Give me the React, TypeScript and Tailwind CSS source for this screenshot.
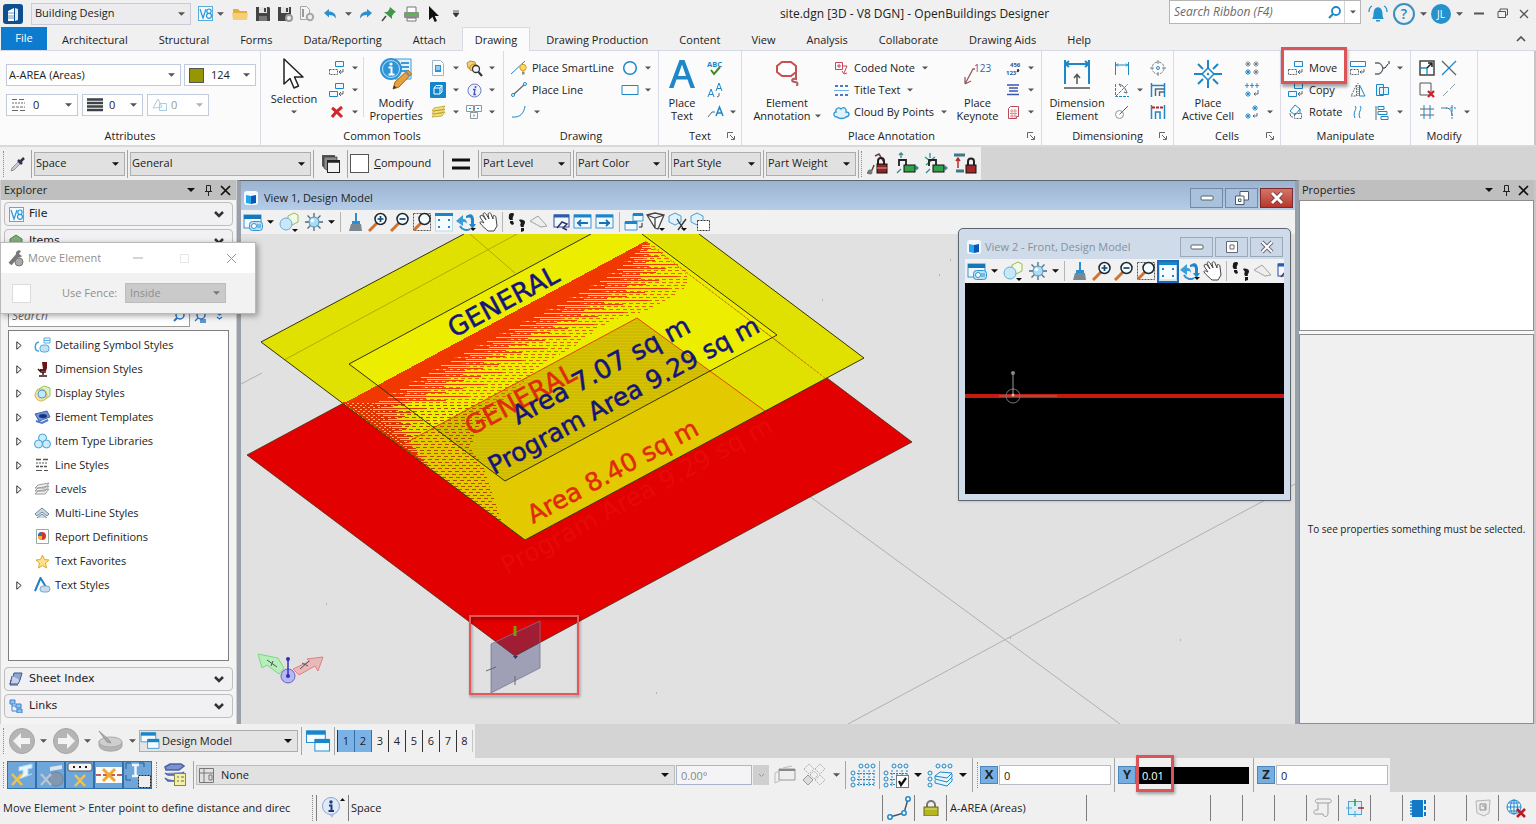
import React, { ReactNode } from "react";

/* ---------- helpers ---------- */

type Kids = { children?: ReactNode };

function S({ w = 16, h, v, children }: { w?: number; h?: number; v?: string } & Kids) {
  return (
    <svg width={w} height={h ?? w} viewBox={v ?? `0 0 ${w} ${h ?? w}`} fill="none" className="shrink-0" aria-hidden="true">
      {children}
    </svg>
  );
}

function Caret({ color = "#555", w = 7 }: { color?: string; w?: number }) {
  return (
    <svg width={w} height="4" viewBox="0 0 8 4" className="shrink-0" aria-hidden="true">
      <path d="M0 0h8L4 4z" fill={color} />
    </svg>
  );
}

function Btn({ label, className = "", children }: { label: string; className?: string } & Kids) {
  return (
    <button type="button" aria-label={label} className={`flex shrink-0 items-center justify-center ${className}`}>
      {children}
    </button>
  );
}

function CaretBtn({ label, color, w, className = "w-[18px]" }: { label: string; color?: string; w?: number; className?: string }) {
  return (
    <Btn label={label} className={`h-[22px] ${className}`}>
      <Caret color={color} w={w} />
    </Btn>
  );
}

function Sel({
  label, value, className = "", inner = "", icon, caret = "#555", cw = 7,
}: { label: string; value: string; className?: string; inner?: string; icon?: ReactNode; caret?: string; cw?: number }) {
  return (
    <div className={`relative flex shrink-0 items-center ${className}`}>
      {icon && <span className="flex shrink-0 items-center pl-1">{icon}</span>}
      <select aria-label={label} defaultValue={value} className={`h-full min-w-0 flex-1 appearance-none bg-transparent outline-none ${inner}`}>
        <option value={value}>{value}</option>
      </select>
      <span className="pointer-events-none absolute right-[5px] flex">
        <Caret color={caret} w={cw} />
      </span>
    </div>
  );
}

const Sep = ({ className = "h-[28px]" }: { className?: string }) => <div className={`w-px shrink-0 bg-[#a5a5a5] ${className}`} />;
const Grip = () => <div className="h-[26px] w-px shrink-0 border-l border-dotted border-[#8a8a8a]" />;

/* ---------- icons ---------- */

const B = "#1d87c8";
const G = "#5b6770";

const I = {
  app: (
    <S w={20}>
      <rect width="20" height="20" rx="3" fill="#0d4f8f" />
      <path d="M5 7l6-3v13H5z" fill="#fff" />
      <path d="M12 4l3 1v11l-3 1z" fill="#dcebf7" />
      <path d="M5 9h6M5 12h6M5 14h6" stroke="#6f9dc5" />
    </S>
  ),
  v8: (
    <S w={15}>
      <rect x=".5" y=".5" width="14" height="14" fill="#f4faff" stroke="#5aaade" />
      <path d="M2 3l3 9 3-9M11 3a2 2 0 0 1 0 4.300a2.400 2.400 0 0 1 0 5a2.400 2.400 0 0 1 0-5A2 2 0 0 1 11 3" stroke="#2b95d4" strokeWidth="1.200" />
    </S>
  ),
  folder: (
    <S w={16}>
      <path d="M1 3h5l2 2h7v9H1z" fill="#e3ac3c" />
      <path d="M0 7h16l-1 7H1z" fill="#f6cf74" />
    </S>
  ),
  save: (
    <S w={16}>
      <path d="M1 1h13l1 1v13H1z" fill="#444" />
      <path d="M4 1h8v6H4z" fill="#e4e4e4" />
      <path d="M9 2h2v4H9z" fill="#444" />
      <path d="M4 10h8v5H4z" fill="#777" />
    </S>
  ),
  saveGear: (
    <S w={16}>
      <path d="M1 1h13v14H1z" fill="#444" />
      <path d="M4 1h8v6H4z" fill="#e4e4e4" />
      <path d="M9 2h2v4H9z" fill="#444" />
      <circle cx="12" cy="12" r="3" stroke="#9a9a9a" strokeWidth="2" fill="#eee" />
    </S>
  ),
  docGear: (
    <S w={16}>
      <path d="M1.500.500h6l3 3v10h-9z" stroke="#a5a5a5" fill="#f3f3f3" />
      <path d="M4 3v8" stroke="#999" strokeWidth="2" />
      <circle cx="11" cy="11" r="3.200" stroke="#a8a8a8" strokeWidth="2" fill="#eee" />
    </S>
  ),
  undo: (
    <S w={14} h={12}>
      <path d="M1 5l5-4v2.500c4 0 7 2 7 7-1.500-2.500-3.500-3.500-7-3.500V9.500z" fill="#2b8fd0" />
    </S>
  ),
  redo: (
    <S w={14} h={12}>
      <path d="M13 5L8 1v2.500c-4 0-7 2-7 7C2.500 8 4.500 7 8 7v2.500z" fill="#2b8fd0" />
    </S>
  ),
  pinGreen: (
    <S w={16}>
      <path d="M9 1l6 5-2 1-2 3 0 3-8-7 3 0 2-2z" fill="#3e9a4a" />
      <path d="M5 10l-4 5" stroke="#444" strokeWidth="1.500" />
    </S>
  ),
  print: (
    <S w={17} h={16}>
      <path d="M4 1h9v6H4z" fill="#fff" stroke="#777" />
      <rect x="1" y="6" width="15" height="6" rx="1" fill="#8d8d8d" />
      <path d="M2 9h13" stroke="#58b94b" strokeWidth="2" />
      <path d="M4 12h9v3H4z" fill="#fff" stroke="#777" />
    </S>
  ),
  cursorBlack: (
    <S w={12} h={18}>
      <path d="M1 1v14l3.500-3 2.200 5 2.300-1-2.200-5H11z" fill="#111" />
    </S>
  ),
  cursorBig: (
    <S w={24} h={34}>
      <path d="M2 2v25l6-5.500 4 9.500 4.500-2-4-9H21z" fill="#fff" stroke="#222" strokeWidth="1.500" strokeLinejoin="round" />
    </S>
  ),
  move: (
    <S w={18} h={16}>
      <path d="M7.500 1.500h8v5h-8z" stroke={B} fill="#f1f8fd" />
      <path d="M1.500 9.500h8v5h-8z" stroke={G} strokeDasharray="2 1" />
      <path d="M15 9v3h-3M13 10l-2 2 2 2" stroke={G} />
    </S>
  ),
  copy: (
    <S w={18} h={16}>
      <path d="M7.500 1.500h8v5h-8zM1.500 9.500h8v5h-8z" stroke={B} fill="#f1f8fd" />
      <path d="M15 9v3h-3M13 10l-2 2 2 2" stroke={G} />
    </S>
  ),
  del: (
    <S w={14}>
      <path d="M2 3c3 2 7 6 10 9M12 2C8 5 5 8 2 12" stroke="#d0282b" strokeWidth="3" />
    </S>
  ),
  modProps: (
    <S w={34} h={34}>
      <path d="M16 2h16v20H16z" fill="#e4f2fb" stroke="#3a9bd8" />
      <path d="M22 6h8M22 10h8M22 14h8" stroke="#3a9bd8" strokeWidth="2" />
      <circle cx="12" cy="12" r="11" fill="#2c94d8" />
      <circle cx="12" cy="12" r="8.500" stroke="#bfe0f5" />
      <circle cx="12" cy="7" r="1.600" fill="#fff" />
      <path d="M9.500 10.500h3V17M9.500 17.500h6" stroke="#fff" strokeWidth="2" />
      <path d="M14 32l2-7L29 13l3.500 4L20 30z" fill="#e6a03c" stroke="#a66a1b" />
      <path d="M14 32l1-3.500 2.500 2z" fill="#333" />
      <path d="M27 15l3.500 4" stroke="#8b8b8b" strokeWidth="2" />
    </S>
  ),
  docBlue: (
    <S w={14} h={16}>
      <path d="M1.500.500h8l3 3v12h-11z" stroke="#9db7c9" fill="#fafdff" />
      <path d="M4 5h6v7H4z" fill="#2f93d6" />
      <path d="M5 7h4M5 9h4" stroke="#fff" />
    </S>
  ),
  cubeBlue: (
    <S w={16}>
      <rect width="16" height="16" rx="1" fill="#1285cc" />
      <path d="M4 6h6v6H4zM4 6l2-2.500h6L10 6M12 3.500V10l-2 2" stroke="#fff" />
    </S>
  ),
  yLayers: (
    <S w={15} h={14}>
      <path d="M1 12l2-3 11-2-3 4zM1 9l2-3 11-2-3 4zM1 6l2-3 11-2-3 4z" stroke="#b99f2a" strokeWidth=".8" fill="#f3e27c" />
    </S>
  ),
  search3: (
    <S w={17}>
      <path d="M1 3l3-2 5 1 1 4-4 3-4-1z" fill="#f6d27a" stroke="#c18e2a" />
      <path d="M4 6l3-2 4 1v4l-4 2-3-1z" fill="#f6d27a" stroke="#c18e2a" />
      <circle cx="10" cy="9" r="3.500" fill="#eef7ff" stroke="#333" strokeWidth="1.300" />
      <path d="M12.500 12l3.500 4" stroke="#333" strokeWidth="2" />
    </S>
  ),
  info: (
    <S w={15}>
      <circle cx="7.500" cy="7.500" r="6.500" fill="#eef1fd" stroke="#6b7cc8" />
      <circle cx="8.500" cy="4" r="1" fill="#3d55c0" />
      <path d="M6 6.500h2L7 11.500h2" stroke="#3d55c0" strokeWidth="1.300" />
    </S>
  ),
  keys: (
    <S w={16}>
      <path d="M.500 1.500h7v6h-7zM8.500 1.500h7v6h-7zM4.500 8.500h7v6h-7z" stroke="#8f979d" />
      <path d="M3 4.500h2M11 4.500h2M8 10.500v2" stroke={B} />
    </S>
  ),
  smartLine: (
    <S w={18}>
      <path d="M1 15L15 2" stroke={B} />
      <circle cx="13" cy="8.500" r="3.200" fill="#ffd965" stroke="#d89b1d" />
      <path d="M12 12.500h2.500v3H12z" fill="#8b8b8b" />
    </S>
  ),
  line: (
    <S w={18}>
      <path d="M3 14L15 3" stroke={G} strokeWidth="1.200" />
      <circle cx="3" cy="14" r="1.500" stroke={B} fill="#fff" />
      <circle cx="15" cy="3" r="1.500" stroke={B} fill="#fff" />
    </S>
  ),
  arc: (
    <S w={18}>
      <path d="M2 14c8 1 12-4 13-11" stroke={B} />
    </S>
  ),
  circle: (
    <S w={16}>
      <circle cx="8" cy="8" r="6.300" stroke={B} strokeWidth="1.500" />
    </S>
  ),
  rect: (
    <S w={18} h={12}>
      <path d="M1 1.500h16v9H1z" stroke={B} />
    </S>
  ),
  abc: (
    <S w={16}>
      <text x="0" y="6.500" fontSize="7.500" fontWeight="700" fill={B} fontFamily="Open Sans, sans-serif">ABC</text>
      <path d="M4 10l3 4 6-7" stroke="#3c8b24" strokeWidth="2" />
    </S>
  ),
  aa: (
    <S w={17}>
      <path d="M1 15l3-8 3 8M2 12.500h4M9 9l3-8 3 8M10 6.500h4" stroke={B} />
      <path d="M12 11v3l-2 1" stroke={G} />
    </S>
  ),
  noteA: (
    <S w={17}>
      <path d="M1 13l4-5h3" stroke={G} />
      <path d="M9 12l3.500-9L16 12M10 9h5" stroke={B} strokeWidth="1.500" />
    </S>
  ),
  bigA: (
    <S w={28} h={32}>
      <path d="M1 30L11.500 2h5L27 30h-4.500l-3-8.500h-11L5.500 30zM10 18h8L14 6.500z" fill={B} />
    </S>
  ),
  elemAnno: (
    <S w={28} h={28}>
      <path d="M9 2h9l5 4v6l-5 4H9l-5-4V6z" fill="#fff" stroke="#c8514f" strokeWidth="2" />
      <path d="M23 11v8c-5-1-5 3-1 3s2 3 2 4" stroke="#b45a58" strokeWidth="2" />
    </S>
  ),
  coded: (
    <S w={15}>
      <path d="M1.500 1.500h7v7h-7zM4 4h2v2H4z" stroke="#c4475a" />
      <path d="M8 5h5l-3 7M8 10l2 3 3-1" stroke="#c4475a" />
    </S>
  ),
  titleText: (
    <S w={15}>
      <path d="M1 3h3M6 3h3M11 3h3M1 12h3M6 12h3M11 12h3" stroke="#4b79c9" strokeWidth="2" />
      <path d="M0 7.500h15" stroke="#6fb0dc" />
    </S>
  ),
  cloud: (
    <S w={17} h={15}>
      <path d="M4 12c-4 0-4-5-1-5-1-4 3-5 5-3 3-3 6 0 5 3 4 0 4 4 0 5-2 2-7 2-9 0z" fill="#dff1fb" stroke="#3196d0" strokeWidth="1.300" />
    </S>
  ),
  keynote: (
    <S w={30} h={28}>
      <path d="M2 24L10 9h2M2 24v-7M2 24l6-3" stroke="#9a5b60" strokeWidth="1.300" />
      <text x="11" y="12" fontSize="10" fill="#3c63a8" fontFamily="Open Sans, sans-serif">123</text>
    </S>
  ),
  renum: (
    <S w={15}>
      <text x="4" y="6" fontSize="6" fontWeight="700" fill="#35539a" fontFamily="Open Sans, sans-serif">456</text>
      <text x="0" y="14" fontSize="6" fontWeight="700" fill="#35539a" fontFamily="Open Sans, sans-serif">123</text>
      <path d="M12 8l1 2-2 1z" fill="#333" stroke="#333" />
    </S>
  ),
  lines: (
    <S w={14}>
      <path d="M1 2h12M3 5h9M3 8h9M1 11.500h12" stroke="#3a56b0" strokeWidth="1.700" />
    </S>
  ),
  redDoc: (
    <S w={14} h={15}>
      <path d="M4.500 1.500h8v10h-2v2h-8v-10z" fill="#fff" stroke="#b94a56" />
      <path d="M4 6h7M4 8.500h7M4 11h7M6 4v9M9 4v9" stroke="#e08e95" />
    </S>
  ),
  dimBig: (
    <S w={28} h={32}>
      <path d="M2 2v24M26 2v24M2 6h24M6 3L2.500 6 6 9M22 3l3.500 3L22 9" stroke={B} strokeWidth="2" />
      <path d="M1 30h26M14 26V17M11 20l3-3.500 3 3.500" stroke="#555" strokeWidth="1.500" />
    </S>
  ),
  dim: (
    <S w={16}>
      <path d="M1.500 2v13M14.500 2v13M2 5h12M4 3.500L2.500 5 4 6.500M12 3.500L13.500 5 12 6.500" stroke={B} />
    </S>
  ),
  dimAngle: (
    <S w={16}>
      <path d="M1.500 2v12.500H15M2 14L14 2" stroke={B} strokeDasharray="3 1" />
      <path d="M5 2c4 1 7 5 8 9M5 2l2 3M13 11l-3-1" stroke={G} />
    </S>
  ),
  dimRad: (
    <S w={16}>
      <circle cx="5.500" cy="10.500" r="4" stroke="#8f979d" />
      <path d="M5.500 10.500L14 2" stroke={G} />
    </S>
  ),
  target: (
    <S w={16}>
      <circle cx="8" cy="8" r="6" stroke="#7b8790" strokeDasharray="3 1" />
      <circle cx="8" cy="8" r="1.500" stroke={B} />
      <path d="M8 0v4M8 12v4M0 8h4M12 8h4" stroke="#7b8790" />
    </S>
  ),
  dimStack: (
    <S w={16}>
      <path d="M1.500 1v14M14.500 1v14M2 3.500h12" stroke={B} strokeWidth="1.500" />
      <path d="M5.500 14V7H14M9.500 14v-4H14" stroke={G} strokeWidth="1.500" />
    </S>
  ),
  dimRed: (
    <S w={16}>
      <path d="M1.500 1v14M14.500 1v14M5.500 15V8H10v7" stroke={B} strokeWidth="1.500" />
      <path d="M2 3.500h12" stroke="#b3262b" strokeWidth="2" strokeDasharray="3 1" />
    </S>
  ),
  cellBig: (
    <S w={30}>
      <path d="M15 1v8M15 21v8M1 15h8M21 15h8M5 5l5 5M20 20l5 5M25 5l-5 5M10 20l-5 5" stroke={B} strokeWidth="2" />
      <path d="M15 9l6 6-6 6-6-6z" stroke={B} strokeWidth="1.500" />
      <circle cx="15" cy="15" r="1.200" fill={B} />
    </S>
  ),
  cells4: (
    <S w={16}>
      <path d="M4 1v6M1 4h6M12 1v6M9 4h6M12 9v6M9 12h6M2 2l4 4M6 2L2 6M10 2l4 4M14 2l-4 4M10 10l4 4M14 10l-4 4" stroke={G} strokeWidth=".7" />
      <path d="M4 9v6M1 12h6M2 10l4 4M6 10l-4 4" stroke={B} />
    </S>
  ),
  cells3: (
    <S w={16}>
      <path d="M3 1v5M1 3.500h4M8 1v5M6 3.500h4M13 1v5M11 3.500h4M4 9v6M1 12h6M2 10l4 4M6 10l-4 4" stroke={B} strokeWidth=".9" />
      <path d="M14 8v4h-4M11.500 10.500L10 12l1.500 1.500" stroke={G} />
    </S>
  ),
  cells2: (
    <S w={16}>
      <path d="M11 1v6M8 4h6M9 2l4 4M13 2L9 6M4 9v6M1 12h6M2 10l4 4M6 10l-4 4" stroke={B} strokeWidth=".9" />
      <path d="M13 9v3h-4M10.500 10.500L9 12l1.500 1.500" stroke={G} />
    </S>
  ),
  rotate: (
    <S w={17}>
      <path d="M7 1l5 4-5 6-5-4zM12 5v5" stroke={B} />
      <path d="M6.500 9.500h7v5h-7z" stroke={G} strokeDasharray="2 1" />
      <path d="M2 9c0 3 1 4 3 4" stroke={G} />
    </S>
  ),
  stretch: (
    <S w={16}>
      <path d="M.500 1.500h15v5H.500z" stroke={B} />
      <path d="M.500 9.500h8v5h-8z" stroke={G} strokeDasharray="2 1" />
      <path d="M14 9v3h-4M11.500 10.500L10 12l1.500 1.500" stroke={G} />
    </S>
  ),
  mirror: (
    <S w={16}>
      <path d="M9.500 3l5.500 11H9.500z" stroke={B} />
      <path d="M6.500 3L1 14h5.500z" stroke={G} strokeDasharray="2 1" />
      <path d="M8 1v14" stroke={G} strokeDasharray="1 1" />
    </S>
  ),
  wave: (
    <S w={14} h={16}>
      <path d="M4 2c3 3-3 6 0 12M9 2c3 3-3 6 0 12" stroke={B} />
    </S>
  ),
  trim: (
    <S w={17}>
      <path d="M1 3h4c5 3 5 8 0 11H1" stroke={G} strokeWidth="1.300" />
      <path d="M9 8h2l3-4M15 1v3" stroke="#222" />
    </S>
  ),
  union: (
    <S w={15}>
      <path d="M1.500 1.500h7v11h-7zM4.500 4.500h9v7h-9z" stroke={B} fill="#e8f4fb" />
      <path d="M8.500 4.500v7" stroke={B} />
    </S>
  ),
  align: (
    <S w={15}>
      <path d="M1 1v14" stroke={G} />
      <path d="M3 1.500h6v3H3zM3 6.500h9v3H3zM6 11.500h7v3H6z" stroke={B} />
    </S>
  ),
  scale: (
    <S w={16}>
      <path d="M1 1h14v14H1z" stroke="#444" strokeWidth="1.500" />
      <path d="M1 8h7v7" stroke={B} strokeWidth="1.300" />
      <path d="M8 8l5-5M9 3h4v4" stroke="#222" strokeWidth="1.500" />
    </S>
  ),
  boxDel: (
    <S w={16}>
      <path d="M1 1h11v12H1z" stroke="#555" />
      <path d="M9 9l6 6M15 9l-6 6" stroke="#cc2229" strokeWidth="2.300" />
    </S>
  ),
  hash: (
    <S w={16}>
      <path d="M5 1v14M11 1v14" stroke={B} />
      <path d="M1 5h14M1 11h14" stroke={G} />
    </S>
  ),
  cross: (
    <S w={16}>
      <path d="M1 1l14 14" stroke={G} strokeWidth="1.300" />
      <path d="M15 1L1 15" stroke={B} strokeWidth="1.300" />
    </S>
  ),
  slash: (
    <S w={14}>
      <path d="M1 13L6 8M8 6l5-5" stroke="#8aa0ae" />
    </S>
  ),
  fillet: (
    <S w={16}>
      <path d="M0 4h6" stroke={B} />
      <path d="M5 4c5 0 6 4 6 8" stroke={G} />
      <path d="M11 1v14M9 4h6" stroke={B} strokeDasharray="3 1" />
    </S>
  ),
  launcher: (
    <S w={8}>
      <path d="M.500 6V.500H6M3 3l4 4M7.500 4v3.500H4" stroke="#666" />
    </S>
  ),
  dropper: (
    <S w={16}>
      <path d="M1 15l1-3 6-6 2 2-6 6z" fill="#c9c9d6" stroke="#777" strokeWidth=".7" />
      <path d="M8 4l4 4M10 6l4-4" stroke="#2f3350" strokeWidth="2.500" />
    </S>
  ),
  stack: (
    <S w={20}>
      <path d="M1 1h13v4H5v10l-4-3z" fill="#555" />
      <path d="M3 3h13v4H7v10l-4-3z" fill="#8a8a8a" stroke="#333" strokeWidth=".7" />
      <rect x="6.500" y="6.500" width="12" height="12" fill="#f2f2f2" stroke="#222" />
      <path d="M6 7.500h13" stroke="#222" strokeWidth="2.500" />
    </S>
  ),
  equals: (
    <S w={18} h={14}>
      <path d="M0 3h18M0 11h18" stroke="#111" strokeWidth="3" />
    </S>
  ),
  lockRed: (
    <S w={24}>
      <path d="M9 4l4-2 5 8M1 21c5 0 6-5 7-8" stroke="#6f4040" strokeWidth="1.500" />
      <circle cx="4" cy="20" r="2.500" fill="#777" />
      <path d="M12 13V9a3 3 0 0 1 6 0v4" stroke="#222" strokeWidth="2" />
      <rect x="11" y="12" width="10" height="9" fill="#8f2326" stroke="#111" />
      <path d="M11 16h10" stroke="#e0a0a0" />
    </S>
  ),
  lockGreen: (
    <S w={24}>
      <path d="M6 1v5M4 3l2-2 2 2M2 21l4-4M20 16h3M21 14l2 2-2 2" stroke="#3b8a94" strokeWidth="1.300" />
      <path d="M4 14V8h7v5" stroke="#222" strokeWidth="1.800" />
      <rect x="9" y="13" width="11" height="7" fill="#33a04c" stroke="#111" />
    </S>
  ),
  lockGreen2: (
    <S w={24}>
      <path d="M6 1v5M1 5l5 4M11 5L6 9M2 21l4-4M20 16h3M21 14l2 2-2 2M2 13l7-6" stroke="#3b8a94" strokeWidth="1.300" />
      <path d="M5 14V8h7v5" stroke="#222" strokeWidth="1.800" />
      <rect x="9" y="13" width="11" height="7" fill="#33a04c" stroke="#111" />
    </S>
  ),
  lockT: (
    <S w={24}>
      <path d="M1 3h11M3 19h8" stroke="#3d7785" strokeWidth="3" />
      <path d="M5 16V7M3 9l2-3 2 3" stroke="#b52c2c" strokeWidth="1.500" />
      <path d="M15 13V9.500a3 3 0 0 1 6 0V13" stroke="#222" strokeWidth="2" />
      <rect x="13" y="13" width="10" height="8" fill="#a0282b" stroke="#111" />
    </S>
  ),
  viewCube: (
    <S w={14}>
      <rect width="14" height="14" rx="3" fill="#f4f8fc" />
      <path d="M2 4l5 1v8l-5-1z" fill="#23a7ec" />
      <path d="M7 5l5-1v8l-5 1z" fill="#0a55b8" />
    </S>
  ),
  viewAttr: (
    <S w={20}>
      <rect x="1" y="3" width="17" height="13" fill="#f2f9fe" stroke="#3295d3" />
      <path d="M1 5h17" stroke="#1777b8" strokeWidth="4" />
      <rect x="6.500" y="9.500" width="13" height="9" rx="3" fill="#b9e0f6" stroke="#3295d3" />
      <circle cx="11" cy="14" r="2.500" fill="#fff" stroke="#3295d3" />
      <path d="M15 12v4M17 12v4" stroke="#3295d3" />
    </S>
  ),
  dispStyle: (
    <S w={20}>
      <path d="M9 4l6-3 4 2v7l-6 3-4-3z" fill="#f2f9e9" stroke="#94bd55" />
      <circle cx="7" cy="12" r="6" fill="#c7e8f8" stroke="#63afd6" />
      <path d="M13 17h6l-3 3z" fill="#111" />
    </S>
  ),
  bright: (
    <S w={20}>
      <path d="M10 1v18M1 10h18M3.500 3.500l13 13M16.500 3.500l-13 13" stroke="#4b6a80" strokeWidth="1.300" />
      <circle cx="10" cy="10" r="5" fill="#a9dcf5" stroke="#4f94b8" />
      <circle cx="8.500" cy="8.500" r="1.800" fill="#fff" />
    </S>
  ),
  brush: (
    <S w={16} h={20}>
      <path d="M7 1h2v9H7z" fill="#2a8fd0" />
      <path d="M4 9h8v3H4z" fill="#2a8fd0" />
      <path d="M3 12h10l1 7H1z" fill="#7a8894" />
    </S>
  ),
  zoomIn: (
    <S w={20}>
      <path d="M9 11l-8 8" stroke="#d1722e" strokeWidth="3" />
      <circle cx="12.500" cy="7" r="5.500" fill="#f4fbff" stroke="#1c2630" strokeWidth="1.500" />
      <path d="M9.500 7h6M12.500 4v6" stroke="#12466e" strokeWidth="1.700" />
    </S>
  ),
  zoomOut: (
    <S w={20}>
      <path d="M9 11l-8 8" stroke="#d1722e" strokeWidth="3" />
      <circle cx="12.500" cy="7" r="5.500" fill="#f4fbff" stroke="#1c2630" strokeWidth="1.500" />
      <path d="M9.500 7h6" stroke="#12466e" strokeWidth="1.700" />
    </S>
  ),
  zoomWin: (
    <S w={20}>
      <rect x="1.500" y="1.500" width="17" height="17" stroke="#555" strokeDasharray="2 1" />
      <path d="M9 11l-7 7" stroke="#d1722e" strokeWidth="3" />
      <circle cx="12.500" cy="7" r="5.500" fill="#f4fbff" stroke="#1c2630" strokeWidth="1.500" />
    </S>
  ),
  fit: (
    <S w={20}>
      <rect x="1.500" y="2" width="17" height="17" fill="#f6fbff" stroke="#bcd9ec" />
      <path d="M1 2.500h18" stroke="#1a85cb" strokeWidth="3" />
      <path d="M4 7h2v2H4zM14 7h2v2h-2zM4 14h2v2H4zM14 14h2v2h-2z" fill="#2187c9" />
    </S>
  ),
  rotView: (
    <S w={20}>
      <path d="M0 9l7-6v4c3 0 4 2 4 5-1-2-2-2-4-2v4z" fill="#3a9fd8" />
      <path d="M10 4c5-3 7-2 8 3v5h2l-3.500 5L13 12h2V8c0-3-2-3-5-2z" fill="#2187c9" />
      <path d="M4 14c2 4 7 5 10 3" stroke="#2c92cf" strokeWidth="2" />
      <path d="M14 16h6l-3 3z" fill="#111" />
    </S>
  ),
  hand: (
    <S w={20}>
      <path d="M6 11L2 5c0-2 2-2 3-1l3 4-3-6c1-2 2-1 3 0l3 5-1-5c1-2 3-1 3 0l2 5 0-3c2-1 3 0 3 2l1 8-3 5-6 0C8 17 4 14 2 11c0-2 2-1 4 0z" fill="#fff" stroke="#444" />
    </S>
  ),
  walk: (
    <S w={20}>
      <path d="M2 3c0-2 4-3 5-1 0 2-2 3-1 6H3C1 6 2 5 2 3zM3 9h3l1 3-2 1-2-2zM12 8c2-1 6 0 6 2 0 3-2 3-1 5h-3c-1-2-1-3 0-4zM14 16h3v3l-3 1z" fill="#1a1a1a" />
    </S>
  ),
  fly: (
    <S w={20}>
      <path d="M1 9l8-5 9 10-6 1z" fill="#eee" stroke="#a2a2a2" />
      <path d="M1 9l11 6" stroke="#bbb" />
    </S>
  ),
  nav: (
    <S w={20}>
      <rect x="3" y="3" width="15" height="12" fill="#f2f9fe" stroke="#34479a" />
      <path d="M3 4h15" stroke="#2a5bb0" strokeWidth="3" />
      <path d="M6 16l5-6 5 2-4 4 4 2" stroke="#333a60" strokeWidth="1.500" />
    </S>
  ),
  prev: (
    <S w={20}>
      <rect x="1" y="3" width="17" height="13" fill="#f2f9fe" stroke="#3b98d4" />
      <path d="M1 4h17" stroke="#1a85cb" strokeWidth="3" />
      <path d="M4 11h11M8 8l-3 3 3 3" stroke="#1572b5" strokeWidth="1.800" />
    </S>
  ),
  next: (
    <S w={20}>
      <rect x="1" y="3" width="17" height="13" fill="#f2f9fe" stroke="#3b98d4" />
      <path d="M1 4h17" stroke="#1a85cb" strokeWidth="3" />
      <path d="M4 11h11M11 8l3 3-3 3" stroke="#1572b5" strokeWidth="1.800" />
    </S>
  ),
  copyView: (
    <S w={20}>
      <path d="M9 2h10v7H9zM1 10h12v8H1z" fill="#f2f9fe" stroke="#3b98d4" />
      <path d="M9 2.500h10M1 10.500h12" stroke="#1a85cb" strokeWidth="3" />
      <path d="M18 11v4h-3" stroke="#222" />
    </S>
  ),
  clip: (
    <S w={20}>
      <path d="M1 3l8-2 9 2-6 14-3-1zM1 3l8 3 9-3M9 6v10" stroke="#444" strokeWidth="1.300" fill="#fafafa" />
      <path d="M13 16h6l-3 3z" fill="#111" />
    </S>
  ),
  clipMask: (
    <S w={20}>
      <path d="M7 1l6 3v6l-6 3-6-3V4z" fill="#dff1fb" stroke="#4a9fd1" />
      <path d="M9 7l7 11M18 7l-8 11" stroke="#333" strokeWidth="1.300" />
      <path d="M13 16h6l-3 3z" fill="#111" />
    </S>
  ),
  section: (
    <S w={20}>
      <path d="M7 1l6 3v6l-6 3-6-3V4z" fill="#dff1fb" stroke="#4a9fd1" />
      <path d="M7.500 8.500h12v10h-12z" stroke="#333" strokeDasharray="2 1" fill="#fff" />
    </S>
  ),
};

/* ---------- title bar & tabs ---------- */

function TitleBar() {
  return (
    <header className="flex h-[27px] shrink-0 items-center bg-[#f0f0f0] pl-[3px]">
      {I.app}
      <Sel label="Workflow" value="Building Design" className="ml-2 h-[22px] w-[160px] border border-[#c9ccd6] bg-[#ececee]" inner="pl-[3px]" />
      <Btn label="Projects" className="ml-[6px] w-4">{I.v8}</Btn>
      <CaretBtn label="Projects options" className="w-[14px]" />
      <div className="ml-[2px] flex items-center">
        <Btn label="Open" className="w-[22px]">{I.folder}</Btn>
        <Btn label="Save" className="w-[23px]">{I.save}</Btn>
        <Btn label="Save settings" className="w-[22px]">{I.saveGear}</Btn>
        <Btn label="Compress" className="w-[22px]">{I.docGear}</Btn>
        <Btn label="Undo" className="w-[24px]">{I.undo}</Btn>
        <CaretBtn label="Undo list" className="w-[12px]" />
        <Btn label="Redo" className="w-[23px]">{I.redo}</Btn>
        <Btn label="Pin" className="w-[23px]">{I.pinGreen}</Btn>
        <Btn label="Print" className="w-[22px]">{I.print}</Btn>
        <Btn label="Element selection" className="w-[23px]">{I.cursorBlack}</Btn>
        <Btn label="Customize toolbar" className="w-[22px]">
          <S w={6} h={7}><path d="M0 1h6M0 3h6L3 7z" stroke="#333" fill="#333" strokeWidth=".8" /></S>
        </Btn>
      </div>
      <h1 className="min-w-0 flex-1 truncate pt-px pl-[193px] text-center text-[12px]">site.dgn [3D - V8 DGN] - OpenBuildings Designer</h1>
      <div className="flex h-[24px] w-[192px] shrink-0 items-center self-start border border-[#b5b5b5] bg-white">
        <input aria-label="Search Ribbon" placeholder="Search Ribbon (F4)" className="min-w-0 flex-1 bg-transparent pl-1 text-[12px] italic outline-none placeholder:text-[#6a6a6a]" />
        <Btn label="Search" className="w-[20px]">
          <S w={13}><circle cx="8" cy="5" r="4" stroke={B} strokeWidth="1.800" /><path d="M5 8l-4 4" stroke={B} strokeWidth="2.200" /></S>
        </Btn>
        <Btn label="Search options" className="h-full w-[16px] border-l border-[#d5d5d5]"><Caret w={6} /></Btn>
      </div>
      <Btn label="Notifications" className="ml-[7px] w-[20px]">
        <S w={20}>
          <path d="M4 15c2-2 1-5 2-8 1-5 7-5 8 0 1 3 0 6 2 8z" fill="#2492cc" />
          <path d="M8 16h4v1.500H8z" fill="#2492cc" />
          <path d="M4 2C2 3 1 6 1 8M16 2c2 1 3 4 3 6" stroke="#2492cc" strokeWidth="1.300" />
        </S>
      </Btn>
      <Btn label="Help" className="ml-1 w-[24px]">
        <span className="flex size-[22px] items-center justify-center rounded-full border-2 border-[#3b8fc0] text-[14px] leading-none font-semibold text-[#2a86bb]">?</span>
      </Btn>
      <CaretBtn label="Help options" className="w-[14px]" />
      <Btn label="Account" className="w-[22px]">
        <span className="flex size-5 items-center justify-center rounded-full bg-[#2492cc] text-[10px] leading-none text-white">JL</span>
      </Btn>
      <CaretBtn label="Account options" className="w-[14px]" />
      <Btn label="Minimize" className="w-[26px]"><S w={10} h={3}><path d="M0 1.500h10" stroke="#555" strokeWidth="2" /></S></Btn>
      <Btn label="Restore" className="w-[20px]"><S w={11}><path d="M1 3.500h7.500v6H1zM3 3V1h7.500v6H9" stroke="#555" /></S></Btn>
      <Btn label="Close" className="w-[24px]"><S w={10}><path d="M1 1l8 8M9 1L1 9" stroke="#555" strokeWidth="1.300" /></S></Btn>
    </header>
  );
}

const TABS = ["Architectural", "Structural", "Forms", "Data/Reporting", "Attach", "Drawing", "Drawing Production", "Content", "View", "Analysis", "Collaborate", "Drawing Aids", "Help"];

function Tabs() {
  return (
    <nav className="flex h-[24px] shrink-0 items-stretch gap-px border-b border-[#d6dae6] bg-[#f0f0f0] pl-px">
      <button type="button" className="-mr-px w-[46px] shrink-0 bg-[#0c7bd0] text-white">File</button>
      {TABS.map((t) => (
        <button
          key={t}
          type="button"
          className={t === "Drawing" ? "relative -mb-px shrink-0 border-x border-t border-[#d6dae6] bg-[#fbfbfc] px-3 pt-px" : "shrink-0 px-[15px] pt-[3px]"}
        >
          {t}
        </button>
      ))}
      <Btn label="Collapse ribbon" className="ml-auto w-[30px]">
        <S w={10} h={6}><path d="M1 5l4-4 4 4" stroke="#555" strokeWidth="1.700" /></S>
      </Btn>
    </nav>
  );
}

/* ---------- ribbon ---------- */

function Group({ title, className, launcher, children }: { title: string; className: string; launcher?: boolean } & Kids) {
  return (
    <section className={`relative flex shrink-0 flex-col border-r border-[#d8dbe4] ${className}`}>
      <div className="flex h-[75px] pt-[6px]">{children}</div>
      <div className="relative flex flex-1 items-center justify-center pt-px">
        {title}
        {launcher && <span className="absolute right-[6px]"><Btn label={`${title} settings`}>{I.launcher}</Btn></span>}
      </div>
    </section>
  );
}

function Big({ icon, lines, className, caret }: { icon: ReactNode; lines: string[]; className: string; caret?: boolean }) {
  return (
    <button type="button" className={`flex shrink-0 flex-col items-center justify-between leading-[13px] ${lines.length > 1 ? "h-[65px]" : "h-[61px]"} ${className}`}>
      <span className="flex h-[34px] items-center">{icon}</span>
      <span className="flex flex-col items-center">
        {lines.map((l, i) => (
          <span key={l} className="flex items-center gap-1 whitespace-nowrap">
            {l}
            {caret && lines.length > 1 && i === lines.length - 1 && <Caret w={6} />}
          </span>
        ))}
        {lines.length === 1 && <span className="flex h-[13px] items-center"><Caret w={6} /></span>}
      </span>
    </button>
  );
}

function Col({ items, className = "", carets = [] }: { items: [string, ReactNode][]; className?: string; carets?: number[] }) {
  return (
    <div className={`flex shrink-0 flex-col ${className}`}>
      {items.map(([n, ic], i) => (
        <div key={n} className="flex h-[22px] items-center">
          <Btn label={n} className="h-[22px] w-[20px]">{ic}</Btn>
          {carets.includes(i) && <CaretBtn label={`${n} options`} w={6} className="w-4" />}
        </div>
      ))}
    </div>
  );
}

function TextTool({ icon, text, caret }: { icon: ReactNode; text: string; caret?: boolean }) {
  return (
    <div className="flex h-[22px] items-center">
      <button type="button" className="flex items-center gap-1 whitespace-nowrap">
        <span className="flex w-[18px] justify-center">{icon}</span>
        {text}
      </button>
      {caret && <CaretBtn label={`${text} options`} w={6} className="w-[20px]" />}
    </div>
  );
}

function Ribbon() {
  return (
    <div className="relative flex h-[94px] shrink-0 border-r-2 border-[#c6c6c6] bg-[#fbfbfc]">
      <Group title="Attributes" className="w-[261px]">
        <div className="flex flex-col gap-2 pt-[7px] pl-[6px]">
          <div className="flex gap-[3px]">
            <Sel label="Active level" value="A-AREA (Areas)" className="h-[22px] w-[175px] border border-[#c3cadb] bg-white" inner="pl-[2px]" />
            <Sel label="Active color" value="124" className="h-[22px] w-[72px] border border-[#c3cadb] bg-white" inner="pl-[7px]"
              icon={<span className="size-[15px] border border-[#555] bg-[#969600]" />} />
          </div>
          <div className="flex gap-1">
            <Sel label="Line style" value="0" className="h-[22px] w-[72px] border border-[#c3cadb] bg-white" inner="pl-[7px]"
              icon={<S w={15} h={14}><path d="M1 1.500h12" stroke="#666" strokeDasharray="5 2" /><path d="M1 5h13" stroke="#666" strokeDasharray="2 1" /><path d="M1 9h13" stroke="#666" strokeDasharray="3 1" /><path d="M1 12.500h13" stroke="#666" strokeDasharray="6 2" /></S>} />
            <Sel label="Line weight" value="0" className="h-[22px] w-[61px] border border-[#c3cadb] bg-white" inner="pl-[6px]"
              icon={<S w={16} h={14}><path d="M0 1.500h16M0 5h16M0 8.500h16M0 12h16" stroke="#3b4248" strokeWidth="2.300" /></S>} />
            <Sel label="Transparency" value="0" caret="#b0b0b0" className="h-[22px] w-[62px] border border-[#c3cadb] bg-white text-[#9a9a9a]" inner="pl-[3px]"
              icon={<S w={16} h={14}><path d="M1 10l5-9 4 8zM7.500 5.500h7v7h-7z" stroke="#a5cfe6" /></S>} />
          </div>
        </div>
      </Group>

      <Group title="Common Tools" className="w-[243px]">
        <Big icon={I.cursorBig} lines={["Selection"]} className="w-[66px]" />
        <Col items={[["Move element", I.move], ["Copy element", I.copy], ["Delete", I.del]]} carets={[0, 1, 2]} />
        <div className="h-[60px] w-px bg-[#d8dbe4]" />
        <Big icon={I.modProps} lines={["Modify", "Properties"]} className="w-[64px]" />
        <Col items={[["Models", I.docBlue], ["References", I.cubeBlue], ["Level display", I.yLayers]]} carets={[0, 1, 2]} />
        <Col items={[["Explorer search", I.search3], ["Element info", I.info], ["Key-in", I.keys]]} carets={[0, 1, 2]} />
      </Group>

      <Group title="Drawing" className="w-[155px]">
        <div className="flex w-[116px] flex-col pl-[6px]">
          <TextTool icon={I.smartLine} text="Place SmartLine" />
          <TextTool icon={I.line} text="Place Line" />
          <div className="flex h-[22px] items-center">
            <Btn label="Place arc" className="w-[18px]">{I.arc}</Btn>
            <CaretBtn label="Arc options" w={6} />
          </div>
        </div>
        <Col items={[["Place circle", I.circle], ["Place block", I.rect]]} carets={[0, 1]} />
      </Group>

      <Group title="Text" className="w-[83px]" launcher>
        <Big icon={I.bigA} lines={["Place", "Text"]} className="w-[46px]" />
        <Col items={[["Spell checker", I.abc], ["Change text", I.aa], ["Place note", I.noteA]]} carets={[2]} />
      </Group>

      <Group title="Place Annotation" className="w-[300px]" launcher>
        <Big icon={I.elemAnno} lines={["Element", "Annotation"]} className="w-[90px]" caret />
        <div className="flex w-[120px] flex-col">
          <TextTool icon={I.coded} text="Coded Note" caret />
          <TextTool icon={I.titleText} text="Title Text" caret />
          <TextTool icon={I.cloud} text="Cloud By Points" caret />
        </div>
        <Big icon={I.keynote} lines={["Place", "Keynote"]} className="w-[51px]" />
        <Col items={[["Renumber", I.renum], ["Legend", I.lines], ["Schedule", I.redDoc]]} carets={[0, 1, 2]} />
      </Group>

      <Group title="Dimensioning" className="w-[132px]" launcher>
        <Big icon={I.dimBig} lines={["Dimension", "Element"]} className="w-[70px]" />
        <Col className="w-9" items={[["Linear dimension", I.dim], ["Angle dimension", I.dimAngle], ["Radial dimension", I.dimRad]]} carets={[1]} />
        <Col items={[["Center mark", I.target], ["Stacked dimension", I.dimStack], ["Change dimension", I.dimRed]]} />
      </Group>

      <Group title="Cells" className="w-[107px]" launcher>
        <Big icon={I.cellBig} lines={["Place", "Active Cell"]} className="w-[68px]" />
        <Col items={[["Cell matrix", I.cells4], ["Replace cell", I.cells3], ["Identify cell", I.cells2]]} carets={[2]} />
      </Group>

      <Group title="Manipulate" className="w-[130px]">
        <div className="flex w-[67px] flex-col pl-[6px]">
          <TextTool icon={I.move} text="Move" />
          <TextTool icon={I.copy} text="Copy" />
          <TextTool icon={I.rotate} text="Rotate" />
        </div>
        <Col items={[["Stretch", I.stretch], ["Mirror", I.mirror], ["Move parallel", I.wave]]} className="mr-1" />
        <Col items={[["Trim", I.trim], ["Union", I.union], ["Align", I.align]]} carets={[0, 2]} />
        <div className="absolute top-[-4px] left-0 h-[37px] w-[66px] border-[3px] border-[#dc5358] shadow-[1px_3px_3px_rgba(0,0,0,.35)]" />
      </Group>

      <Group title="Modify" className="w-[67px]">
        <Col className="ml-[6px]" items={[["Scale", I.scale], ["Delete vertex", I.boxDel], ["Break", I.hash]]} />
        <Col className="ml-[2px]" items={[["Intersect", I.cross], ["Partial delete", I.slash], ["Fillet", I.fillet]]} carets={[2]} />
      </Group>
    </div>
  );
}

/* ---------- part toolbar ---------- */

const graySel = "h-[24px] border border-[#adadad] bg-[#e1e1e1]";

function PartBar() {
  return (
    <div className="flex h-[35px] shrink-0 border-t-2 border-[#d9d9d9] bg-[#d4d4d4]">
      <div className="flex items-center gap-[2px] bg-[#f0f0f0] pr-[3px] pl-[3px]">
        <Grip />
        <Btn label="Match" className="w-[23px]">{I.dropper}</Btn>
        <Sep />
        <Sel label="Category" value="Space" caret="#111" className={`${graySel} w-[91px]`} inner="pl-px" />
        <Sep />
        <Sel label="Part" value="General" caret="#111" className={`${graySel} w-[181px]`} inner="pl-px" />
        <Sep />
        <Btn label="Layers" className="w-[29px]">{I.stack}</Btn>
        <Sep />
        <label className="flex w-[91px] items-center gap-[5px]">
          <input type="checkbox" className="size-[19px] appearance-none border border-[#555] bg-white" />
          <span><u>C</u>ompound</span>
        </label>
        <Sep />
        <Btn label="Equals" className="w-[30px]">{I.equals}</Btn>
        {["Part Level", "Part Color", "Part Style", "Part Weight"].map((p) => (
          <React.Fragment key={p}>
            <Sep />
            <Sel label={p} value={p} caret="#111" className={`${graySel} w-[90px]`} inner="pl-px" />
          </React.Fragment>
        ))}
        <Sep />
        <Grip />
        <Btn label="Lock A" className="w-[27px]">{I.lockRed}</Btn>
        <Btn label="Lock B" className="w-[27px]">{I.lockGreen}</Btn>
        <Btn label="Lock C" className="w-[27px]">{I.lockGreen2}</Btn>
        <Btn label="Lock D" className="w-[27px]">{I.lockT}</Btn>
      </div>
    </div>
  );
}

/* ---------- explorer ---------- */

function PanelHead({ title }: { title: string }) {
  return (
    <div className="flex h-[20px] shrink-0 items-center bg-[#bfbfbf] pr-[2px] pl-[3px]">
      <h2 className="flex-1">{title}</h2>
      <Btn label="Panel menu" className="w-[18px]"><Caret color="#111" w={8} /></Btn>
      <Btn label="Pin panel" className="w-[16px]"><S w={7} h={11}><path d="M1.500.500h4v6h-4zM0 6.500h7M3.500 7v4" stroke="#222" /></S></Btn>
      <Btn label="Close panel" className="w-[18px]"><S w={11}><path d="M1 1l9 9M10 1L1 10" stroke="#111" strokeWidth="1.700" /></S></Btn>
    </div>
  );
}

function Accordion({ title, icon }: { title: string; icon: ReactNode }) {
  return (
    <button type="button" className="mx-[3px] flex h-[24px] shrink-0 items-center gap-[5px] rounded-[4px] border border-[#bdbdc2] bg-[#f1f1f3] pr-[8px] pl-[3px] font-['DejaVu_Sans']">
      <span className="flex w-[16px] justify-center">{icon}</span>
      <span className="flex-1 text-left">{title}</span>
      <S w={10} h={7}><path d="M1 1l4 4 4-4" stroke="#333" strokeWidth="2.500" /></S>
    </button>
  );
}

const tIcon = {
  detail: <S w={17}><path d="M10 1h6v5h-6zM10 3.500h6" stroke="#5aa9dc" /><rect x="6" y="8" width="9" height="7" rx="3" fill="#bfe2f6" stroke="#5aa9dc" /><path d="M5 5c-5 1-5 9 0 9" stroke="#4a9fd1" strokeWidth="1.500" /></S>,
  dimen: <S w={16}><path d="M8 1h5v6l-1 3H6V8h3z" fill="#6b1418" /><path d="M4 8l3 3h5M9 11v3M5 15h8" stroke="#3b1012" strokeWidth="1.500" /></S>,
  display: <S w={17}><path d="M3 5l7-4 6 2v8l-6 4-7-2z" fill="#dff0c2" stroke="#9ec25b" /><circle cx="7" cy="10" r="6" fill="#f2dfa2" stroke="#d9b65c" /><circle cx="8" cy="9" r="4" fill="#c7e8f8" stroke="#4a9fd1" /></S>,
  elem: <S w={17}><path d="M1 5l12-3 3 6-11 4z" fill="#6f93d8" stroke="#3d63b3" /><ellipse cx="9" cy="7" rx="4" ry="2" fill="#1c3478" /><path d="M2 12l6 2 6-3" stroke="#5079c8" strokeWidth="2" /></S>,
  item: <S w={17}><circle cx="8.500" cy="5" r="4" fill="#ccecfa" stroke="#3fa0d6" /><circle cx="4.500" cy="11" r="4" fill="#ccecfa" stroke="#3fa0d6" /><circle cx="12.500" cy="11" r="4" fill="#ccecfa" stroke="#3fa0d6" /></S>,
  line: <S w={14}><path d="M1 1.500h12" stroke="#555" strokeWidth="1.500" strokeDasharray="5 2" /><path d="M1 5h12" stroke="#555" strokeDasharray="2 1" /><path d="M1 8.500h12" stroke="#555" strokeWidth="1.500" strokeDasharray="3 1" /><path d="M1 12.500h12" stroke="#555" strokeDasharray="6 2" /></S>,
  levels: <S w={16} h={15}><path d="M1 12l3-3 11-2-4 5zM1 9l3-3 11-2-4 5zM1 6l3-3 11-2-4 5z" stroke="#9b9b9b" fill="#f1f1f1" /></S>,
  multi: <S w={16}><path d="M1 9l7-6 7 6-2 2-5-4-5 4zM3 13l5-4 5 4" stroke="#6c8797" fill="#c9dae4" /></S>,
  report: <S w={15} h={16}><path d="M1.500.500h12v14h-12z" stroke="#9aa" fill="#fff" /><circle cx="7" cy="7" r="4" fill="#d8342a" /><path d="M7 7v4a4 4 0 0 1-4-4z" fill="#f0b429" /><path d="M7 3a4 4 0 0 0-4 4h4z" fill="#2f6fc4" /></S>,
  star: <S w={15}><path d="M7.500 1l2 4.500 4.500.500-3.500 3 1 5-4-2.500-4 2.500 1-5L1 6l4.500-.500z" fill="#fbe28a" stroke="#e0a92e" /></S>,
  text: <S w={17}><path d="M1 14L6.500 1 12 10" stroke="#1d7fc4" strokeWidth="2" /><rect x="6" y="9" width="10" height="6" rx="3" fill="#c4dcee" stroke="#7ba7c9" /></S>,
};

const TREE: [string, ReactNode, boolean][] = [
  ["Detailing Symbol Styles", tIcon.detail, true],
  ["Dimension Styles", tIcon.dimen, true],
  ["Display Styles", tIcon.display, true],
  ["Element Templates", tIcon.elem, true],
  ["Item Type Libraries", tIcon.item, true],
  ["Line Styles", tIcon.line, true],
  ["Levels", tIcon.levels, true],
  ["Multi-Line Styles", tIcon.multi, false],
  ["Report Definitions", tIcon.report, false],
  ["Text Favorites", tIcon.star, false],
  ["Text Styles", tIcon.text, true],
];

function Explorer() {
  return (
    <aside className="flex w-[237px] shrink-0 flex-col border-x border-[#d0d0d0] bg-[#f4f4f4]">
      <PanelHead title="Explorer" />
      <div className="flex min-h-0 flex-1 flex-col pt-[2px] pb-[6px]">
        <Accordion title="File" icon={I.v8} />
        <div className="h-[3px]" />
        <Accordion title="Items" icon={<S w={14}><path d="M7 1l6 4v7l-6 2-6-2V5z" fill="#7fae74" stroke="#55804c" /></S>} />
        <div className="mt-[52px] mr-[5px] ml-[7px] flex h-[22px] shrink-0 items-center">
          <div className="flex h-full w-[182px] items-center border border-[#999] bg-white">
            <input aria-label="Search explorer" placeholder="Search" className="min-w-0 flex-1 bg-transparent pl-[3px] text-[12px] italic outline-none placeholder:text-[#6a6a6a]" />
            <Btn label="Search" className="w-5"><S w={12}><circle cx="7" cy="5" r="4" stroke="#2a76c8" strokeWidth="1.500" /><path d="M4 8l-3 3" stroke="#2a76c8" strokeWidth="2" /></S></Btn>
          </div>
          <Btn label="Search options" className="w-[20px]"><S w={13}><circle cx="7" cy="5" r="4" stroke="#2a76c8" strokeWidth="1.500" /><path d="M4 8l-3 3M6 10h6M6 12h6" stroke="#2a76c8" strokeWidth="1.300" /></S></Btn>
          <Btn label="More" className="w-[18px]"><S w={7} h={9}><path d="M1 1l2.500 2L6 1M1 5l2.500 2L6 5" stroke="#2a76c8" strokeWidth="1.300" /></S></Btn>
        </div>
        <ul className="mx-[7px] mt-[3px] min-h-0 flex-1 overflow-hidden border border-[#7d7d82] bg-white pt-[2px]">
          {TREE.map(([n, ic, open]) => (
            <li key={n} className="flex h-[24px] items-center">
              <span className="flex w-[20px] justify-center">
                {open && <S w={6} h={9}><path d="M.800.800v7.400L5.200 4.500z" stroke="#333" /></S>}
              </span>
              <span className="flex w-[26px] justify-center">{ic}</span>
              <span>{n}</span>
            </li>
          ))}
        </ul>
        <div className="h-[6px]" />
        <Accordion title="Sheet Index" icon={<S w={14}><path d="M5 1h8l-2 7H3z" fill="#8ea5d6" stroke="#3f5687" /><path d="M3 4L1 12h8l2-4M2 8l-1 5h8" stroke="#3f5687" fill="#c7d2ea" /></S>} />
        <div className="h-[3px]" />
        <Accordion title="Links" icon={<S w={14}><path d="M1 1h5v4H1zM7 5h5v4H7zM8 10h5v4H8z" fill="#8dc3f0" stroke="#3a83cf" /><path d="M3 5v7h5M3 7h4" stroke="#3a83cf" /></S>} />
      </div>
    </aside>
  );
}

function MoveDialog() {
  return (
    <div role="dialog" aria-label="Move Element" className="absolute top-[62px] left-0 z-10 w-[256px] border border-[#b9b9b9] bg-[#f2f2f2] text-[#8f8f8f] shadow-[2px_2px_6px_rgba(0,0,0,.35)]">
      <div className="flex h-[30px] items-center bg-white pl-[6px]">
        <S w={17} h={18}><path d="M3 15l8-9" stroke="#777" strokeWidth="4" /><path d="M9 6c-1-4 3-6 5-4l-2 3 3 2c-1 2-4 2-6-1z" fill="#777" /><circle cx="12" cy="13" r="4" fill="#aaa" stroke="#777" /></S>
        <span className="ml-1 w-[98px]">Move Element</span>
        <Btn label="Minimize dialog" className="w-[23px]"><S w={10} h={2}><path d="M0 1h10" stroke="#aaa" /></S></Btn>
        <Btn label="Maximize dialog" className="ml-[24px] w-[22px]"><S w={9}><path d="M.500.500h8v8h-8z" stroke="#e6e6e6" /></S></Btn>
        <Btn label="Close dialog" className="ml-[24px] w-[24px]"><S w={11}><path d="M1 1l9 9M10 1L1 10" stroke="#999" /></S></Btn>
      </div>
      <div className="flex h-[40px] items-center pl-[11px]">
        <input id="fence" type="checkbox" className="size-[19px] appearance-none border border-[#dcdcdc] bg-white" />
        <label htmlFor="fence" className="ml-[31px] w-[63px]">Use Fence:</label>
        <Sel label="Fence mode" value="Inside" caret="#777" className="h-[20px] w-[101px] border border-[#bdbdbd] bg-[#cacaca]" inner="pl-1" />
      </div>
    </div>
  );
}

/* ---------- views ---------- */

function ViewTools({ fitActive, full }: { fitActive?: boolean; full?: boolean }) {
  const b = "h-[22px] w-[22px]";
  const line = "h-[20px] w-px shrink-0 bg-[#b5b5b5]";
  return (
    <div className="flex h-[24px] shrink-0 items-center overflow-hidden bg-[#f1f1f1] pl-px">
      <Btn label="View attributes" className={b}>{I.viewAttr}</Btn>
      <CaretBtn label="View attributes options" color="#111" className="w-[13px]" />
      <Btn label="Display style" className="h-[22px] w-[24px]">{I.dispStyle}</Btn>
      <Btn label="Brightness" className="h-[22px] w-[25px]">{I.bright}</Btn>
      <CaretBtn label="Brightness options" color="#111" className="w-[10px]" />
      <div className={`mx-1 ${line}`} />
      <Btn label="Update view" className={b}>{I.brush}</Btn>
      <Btn label="Zoom in" className={b}>{I.zoomIn}</Btn>
      <Btn label="Zoom out" className={b}>{I.zoomOut}</Btn>
      <Btn label="Window area" className={b}>{I.zoomWin}</Btn>
      <Btn label="Fit view" className={fitActive ? "h-[23px] w-[22px] border-2 border-[#1d6bb8]" : b}>{I.fit}</Btn>
      <Btn label="Rotate view" className={b}>{I.rotView}</Btn>
      <Btn label="Pan view" className={b}>{I.hand}</Btn>
      <div className={`mx-[3px] ${line}`} />
      <Btn label="Walk" className={b}>{I.walk}</Btn>
      <Btn label="Fly" className={b}>{I.fly}</Btn>
      <Btn label="Navigate view" className={b}>{I.nav}</Btn>
      {full && (
        <>
          <Btn label="View previous" className={b}>{I.prev}</Btn>
          <Btn label="View next" className={b}>{I.next}</Btn>
          <div className={`mx-[3px] ${line}`} />
          <Btn label="Copy view" className={b}>{I.copyView}</Btn>
          <Btn label="Clip volume" className={b}>{I.clip}</Btn>
          <Btn label="Clip mask" className={b}>{I.clipMask}</Btn>
          <Btn label="Section" className={b}>{I.section}</Btn>
        </>
      )}
    </div>
  );
}

const lerp = (t: number[][], y: number) => {
  for (let i = 1; i < t.length; i++) {
    if (y <= t[i][0]) {
      const [a, b] = [t[i - 1], t[i]];
      return b[1] === a[1] ? a[1] : a[1] + ((y - a[0]) / (b[0] - a[0])) * (b[1] - a[1]);
    }
  }
  return t[t.length - 1][1];
};
const SOLID = [[242, 650], [263, 674], [270, 680], [285, 672], [297, 654], [313, 622], [330, 578], [345, 550], [365, 512], [380, 490], [397, 466], [413, 448], [430, 432], [447, 424], [463, 428], [480, 442], [524, 480]];
const DASH = [[242, 650], [270, 686], [285, 688], [297, 670], [310, 648], [320, 610], [345, 576], [365, 540], [380, 525], [397, 508], [413, 492], [430, 478], [447, 470], [463, 482], [480, 488], [497, 494], [524, 502]];
const REACH = [1, 0.3, 0.65, 0.45, 0.85, 0.28, 0.55, 0.38, 0.75, 0.25, 0.6, 0.42];

function Stipple() {
  const out: ReactNode[] = [];
  for (let y = 242; y < 524; y++) {
    const xl = Math.round(y < 402 ? 645 - (y - 241) * 1.861 : 343 + (y - 402) * 1.32);
    const dark = y > 402;
    const xs = Math.round(xl + Math.max(0, lerp(SOLID, y) - xl) * REACH[y % 12] * (dark ? 0.7 : 1));
    if (xs > xl + 1) out.push(<path key={`s${y}`} d={`M${xl} ${y + 0.5}H${xs}`} stroke={dark ? "#dc3600" : "#f03800"} strokeDasharray={dark && y % 2 ? "3 2" : undefined} />);
    if (y % 3 === 0) {
      const xd = lerp(DASH, y);
      if (xd > xs) out.push(<path key={`d${y}`} d={`M${xs} ${y + 0.5}H${xd}`} stroke={dark ? "#b84a00" : "#e26800"} strokeDasharray="4 3" />);
    }
  }
  return <g shapeRendering="crispEdges">{out}</g>;
}

function MainCanvas() {
  const rows: number[] = [];
  for (let y = 320; y < 482; y += 3) rows.push(y);
  return (
    <svg className="block min-h-0 w-full flex-1 bg-[#e1e1e1]" viewBox="241 234 1054 490" preserveAspectRatio="xMinYMin slice" role="img" aria-label="3D design model">
      <defs>
        <clipPath id="upper"><path d="M261 342L525 540L864 358L699 234L464 234z" /></clipPath>
        <clipPath id="inner"><path d="M349 364L505 481L777 335L645 234L591 234z" /></clipPath>
        <filter id="sh"><feDropShadow dx="1" dy="2" stdDeviation="1.500" floodOpacity=".4" /></filter>
      </defs>
      <path d="M241 384L262 373M756 457L1120 724M848 724L1295 484" stroke="#b0b0b0" />
      <path d="M939 275h1M1010 638h1M326 604h1M656 693h1M1180 640h1M822 300h1M950 260h1" stroke="#888" />
      <path d="M247 455L645 241L912 442L515 656z" fill="#e20000" stroke="#4a2a10" strokeWidth=".8" />
      <g fill="#f03020" opacity=".22" fontFamily="DejaVu Sans, sans-serif">
        <text transform="translate(507 575) rotate(-28.300)" fontSize="25">Program Area 9.29 sq m</text>
      </g>
      <path d="M261 342L525 540L864 358L699 234L464 234z" fill="#e1e100" />
      <g clipPath="url(#upper)">
        <path d="M349 364L505 481L777 335L645 234L591 234z" fill="#eded00" />
        <path d="M637 318L343 476L525 545L765 411z" fill="#e2c900" />
        <g clipPath="url(#inner)">
          <path d="M637 318L343 476L525 545L765 411z" fill="#d8c300" />
          <path d={rows.map((y) => `M${637 - (y - 318) * 1.861} ${y}H${637 + (y - 318) * 1.38}`).join("")} stroke="#c2ae00" strokeWidth=".8" />
        </g>
        <path d="M262 372L517 234M470 234L515 273" stroke="#a8a800" strokeWidth=".9" />
        <Stipple />
        <path d="M637 318L400 446M637 318L765 411" stroke="#e04a00" />
        <path d="M645 241L777 341L825 378" stroke="#e06a00" strokeDasharray="2 2" />
      </g>
      <path d="M464 234L261 342L525 540L864 358L699 234M591 234L349 364L505 481L777 335L642 234" stroke="#33330a" fill="none" />
      <g fontFamily="DejaVu Sans, sans-serif" fontSize="26" strokeWidth=".5">
        <text transform="translate(454 338) rotate(-28.300)" fill="#14147c" stroke="#14147c">GENERAL</text>
        <text transform="translate(471 436) rotate(-28.300)" fill="#e02a0c" stroke="#e02a0c">GENERAL</text>
        <text transform="translate(518 425) rotate(-28.300)" fill="#14147c" stroke="#14147c">Area 7.07 sq m</text>
        <text transform="translate(494 475) rotate(-28.300)" fontSize="25" fill="#14147c" stroke="#14147c">Program Area 9.29 sq m</text>
        <text transform="translate(533 524) rotate(-28.300)" fontSize="25" fill="#e02a0c" stroke="#e02a0c">Area 8.40 sq m</text>
      </g>
      <path d="M491 644L540 621V668L491 693z" fill="#44447c" fillOpacity=".42" stroke="#77779a" strokeWidth=".8" />
      <path d="M515 626v10" stroke="#7a9a10" strokeWidth="3" />
      <path d="M486 671l10-4M515 676v9" stroke="#666" />
      <path d="M513 656h5l-2.500 3z" fill="#336" />
      <rect x="470" y="616" width="108" height="78" fill="none" stroke="#e2585c" strokeWidth="2" filter="url(#sh)" />
      <path d="M284 668l-6-10-20-4 4 14 5-3 12 9z" fill="#b6efb9" stroke="#7ed685" />
      <path d="M293 669l17-8-3-2 16-2-5 14-3-5-16 9z" fill="#e8b9b9" stroke="#e07f84" />
      <path d="M267 660l10 7M271 666l2-5M300 669l9-8M302 663l6 3" stroke="#555" />
      <circle cx="288" cy="676" r="7" fill="#b7b7f2" stroke="#6464c8" />
      <path d="M288 676V659" stroke="#3333b8" strokeWidth="1.500" />
      <circle cx="288" cy="676" r="2" fill="#2f2fb5" /><circle cx="288" cy="659" r="2" fill="#2f2fb5" />
    </svg>
  );
}

const minI = <S w={14} h={7}><rect x="1" y="1" width="12" height="4" rx="1" fill="#fff" stroke="#566" /></S>;

function View2() {
  const wb = "h-[20px] w-[33px] border border-[#9aa9b9] bg-[#c9d7e6]";
  return (
    <div className="absolute top-[47px] right-[4px] flex h-[273px] w-[333px] flex-col rounded-t-[5px] border border-[#5c6670] bg-[#cfdbe8] px-[6px] pb-[6px] shadow-sm">
      <div className="flex h-[30px] shrink-0 items-center pt-[6px] text-[#8492a0]">
        <span className="flex w-[20px] pl-[2px]">{I.viewCube}</span>
        <span className="flex-1 whitespace-nowrap">View 2 - Front, Design Model</span>
        <div className="flex gap-[2px] pr-px">
          <Btn label="Minimize view" className={wb}>{minI}</Btn>
          <Btn label="Maximize view" className={wb}><S w={14}><path d="M1.500 1.500h11v11h-11zM5 5h4v4H5z" stroke="#667" fill="#fff" /></S></Btn>
          <Btn label="Close view" className={wb}><S w={14}><path d="M2 2l10 10M12 2L2 12" stroke="#667" strokeWidth="4" /><path d="M2 2l10 10M12 2L2 12" stroke="#fff" strokeWidth="2" /></S></Btn>
        </div>
      </div>
      <ViewTools fitActive />
      <svg className="block min-h-0 w-full flex-1 bg-black" viewBox="0 0 319 211" preserveAspectRatio="xMinYMin slice" role="img" aria-label="Front view">
        <path d="M0 113h319" stroke="#c41a10" strokeWidth="4" />
        <path d="M34 113h58" stroke="#a86a5a" />
        <circle cx="48" cy="113" r="7" fill="none" stroke="#777" />
        <path d="M48 113V90" stroke="#999" />
        <circle cx="48" cy="90" r="2" fill="#888" /><circle cx="48" cy="112" r="1.500" fill="#bbb" />
      </svg>
    </div>
  );
}

function MainView() {
  const wb = "h-[20px] w-[33px] border border-[#7288a4] bg-[#a9c1dd]";
  return (
    <section className="relative flex min-w-0 flex-1 flex-col border-x-4 border-x-[#98a1ab] border-t-[1px] border-t-[#5d6671] bg-[#e1e1e1]">
      <div className="flex h-[29px] shrink-0 items-center bg-linear-to-b from-[#9ab3d1] to-[#b6cde8] pr-[2px] pl-[3px] pt-[5px]">
        <span className="flex w-[20px]">{I.viewCube}</span>
        <span className="flex-1">View 1, Design Model</span>
        <div className="flex gap-[2px]">
          <Btn label="Minimize view" className={wb}>{minI}</Btn>
          <Btn label="Restore view" className={wb}>
            <S w={16}><path d="M6 1.500h8.500V10H6z" fill="#fff" stroke="#4c5a6c" /><path d="M1.500 6h8.500v8.500H1.500zM4.500 9h2.500v2.500H4.500z" fill="#fff" stroke="#4c5a6c" /></S>
          </Btn>
          <Btn label="Close view" className="h-[20px] w-[33px] border border-[#7d2a2a] bg-linear-to-b from-[#d27468] to-[#b8352c]">
            <S w={14}><path d="M2 2l10 10M12 2L2 12" stroke="#6b2a2a" strokeWidth="4.500" /><path d="M2 2l10 10M12 2L2 12" stroke="#fff" strokeWidth="3" /></S>
          </Btn>
        </div>
      </div>
      <ViewTools full />
      <MainCanvas />
      <View2 />
    </section>
  );
}

function Properties() {
  return (
    <aside className="flex w-[235px] shrink-0 flex-col bg-[#f8f8f8]">
      <PanelHead title="Properties" />
      <div className="h-[131px] shrink-0 border border-[#8d8d8d] bg-white" />
      <div className="mt-[3px] flex min-h-0 flex-1 items-center justify-center border border-[#8d8d8d] bg-[#f0f0f0] text-[10px] whitespace-nowrap">
        To see properties something must be selected.
      </div>
    </aside>
  );
}

/* ---------- bottom bars ---------- */

const winStack = (w: number) => (
  <S w={w} h={Math.round(w * 0.9)} v="0 0 24 22">
    <path d="M1 1h18v11H1z" fill="#f5fbff" stroke="#2a8fd0" /><path d="M1 2.500h18" stroke="#1a85cb" strokeWidth="4" />
    <path d="M9 9h14v11H9z" fill="#f5fbff" stroke="#2a8fd0" /><path d="M9 10.500h14" stroke="#1a85cb" strokeWidth="4" />
  </S>
);

function ModelBar() {
  return (
    <div className="flex h-[34px] shrink-0 bg-[#d4d4d4]">
      <div className="flex items-center bg-[#f0f0f0] pr-[2px] pl-[3px]">
        <Grip />
        <Btn label="Back" className="ml-[5px] w-[26px]"><S w={26}><circle cx="13" cy="13" r="12.500" fill="#b5b5b5" stroke="#a4a4a4" /><path d="M4 13l8-8v5h9v6h-9v5z" fill="#f3f3f3" /></S></Btn>
        <CaretBtn label="Back list" className="w-[17px]" />
        <Btn label="Forward" className="w-[28px]"><S w={26}><circle cx="13" cy="13" r="12.500" fill="#b5b5b5" stroke="#a4a4a4" /><path d="M22 13l-8-8v5H5v6h9v5z" fill="#f3f3f3" /></S></Btn>
        <CaretBtn label="Forward list" className="w-[15px]" />
        <Btn label="Reference" className="w-[30px]"><S w={26} h={22}><path d="M2 11v4c0 8 22 8 23 1v-4" stroke="#a5a5a5" fill="#b5b5b5" /><ellipse cx="13.500" cy="12" rx="11.500" ry="5" fill="#cfcfcf" stroke="#a9a9a9" /><path d="M2 1l10 9 2 3-4-1z" fill="#aaa" stroke="#999" /></S></Btn>
        <CaretBtn label="Reference list" className="w-[14px]" />
        <Sel label="Active model" value="Design Model" caret="#111" cw={8} className="h-[22px] w-[159px] border border-[#adadad] bg-[#e4e4e4]" inner="pl-[2px]" icon={<span className="-ml-1">{winStack(20)}</span>} />
        <div className="w-[3px]" />
        <Sep />
        <Btn label="Views" className="w-[32px]">{winStack(26)}</Btn>
        <Sep />
        <div className="ml-[2px] flex border-l border-[#333]">
          {[1, 2, 3, 4, 5, 6, 7, 8].map((n) => (
            <button key={n} type="button" className={n < 3 ? "h-[22px] w-[17px] border-r border-[#3570a8] bg-[#7ab2e6]" : n === 8 ? "h-[22px] w-[16px] border-r border-[#c4c4c4]" : "h-[22px] w-[17px] border-r border-[#333]"}>
              {n}
            </button>
          ))}
        </div>
      </div>
    </div>
  );
}

const xMark = <path d="M3 12l10 11M13 12L3 23" stroke="#f2c343" strokeWidth="2.500" />;

function Coord({ axis, value, hot }: { axis: string; value: string; hot?: boolean }) {
  return (
    <div className="relative flex items-center">
      <label htmlFor={`c${axis}`} className="flex h-[18px] w-[18px] items-center justify-center border border-[#4b86bd] bg-[#74aee2] text-[13px] font-bold">{axis}</label>
      <input
        id={`c${axis}`}
        defaultValue={value}
        className={hot ? "ml-[3px] h-[17px] w-[110px] bg-black pl-[3px] text-white outline-none" : "ml-px h-[20px] w-[112px] border border-[#b9bcc4] bg-white pl-[4px] outline-none"}
      />
      {hot && <div className="absolute top-[-11px] left-[18px] h-[37px] w-[38px] border-[3px] border-[#dc5358] shadow-[1px_2px_3px_rgba(0,0,0,.35)]" />}
    </div>
  );
}

const gridDots = (
  <>
    <path d="M9 8v16M14 8v16M19 8v16M24 8v16M7 11.500h18M7 17.500h18M7 22.500h18" stroke={B} strokeDasharray="2 1" />
    <circle cx="11" cy="4" r="2" stroke={B} /><circle cx="17" cy="4" r="2" stroke={B} /><circle cx="23" cy="4" r="2" stroke={B} />
    <circle cx="3" cy="11" r="2" stroke={B} /><circle cx="3" cy="17" r="2" stroke={B} /><circle cx="3" cy="23" r="2" stroke={B} />
  </>
);

function CoordBar() {
  const t = "h-[28px] w-[29px] border border-[#2f6fae] bg-[#6fa6da]";
  return (
    <div className="flex h-[34px] shrink-0 bg-[#d4d4d4]">
      <div className="flex items-center bg-[#f0f0f0] pr-[2px] pl-[3px]">
        <Grip />
        <div className="ml-[3px] flex">
          <Btn label="Beam" className={t}><S w={26}><path d="M10 5l13-3v4l-4 1v6l4-1-13 5v-3l4-2V8l-4 1z" fill="#e8f6ff" stroke="#a8d8f2" />{xMark}</S></Btn>
          <Btn label="Beam history" className={t}><S w={26}><path d="M12 5l12-2v4l-12 2z" fill="#dfe5ea" /><circle cx="18" cy="17" r="7" fill="#8298ae" stroke="#6d8298" /><path d="M3 12l10 11M13 12L3 23" stroke="#b9c4cf" strokeWidth="2.500" /></S></Btn>
          <Btn label="Annotation toggle" className={t}><S w={26}><rect x="1" y="1" width="24" height="8" rx="2" fill="#f5f5f5" stroke="#556" /><path d="M6 5h2M12 5h2M18 5h2" stroke="#222" strokeWidth="2" /><path d="M8 13l10 11M18 13L8 24" stroke="#f2c343" strokeWidth="2.500" /></S></Btn>
          <Btn label="Centerline toggle" className={t}><S w={26}><path d="M0 5h26v16H0z" fill="#fafafa" /><path d="M0 13h26" stroke="#b02a2a" strokeDasharray="5 2" strokeWidth="1.500" /><path d="M7 7l12 12M19 7L7 19" stroke="#f0a92e" strokeWidth="3" /></S></Btn>
          <Btn label="Section toggle" className={t}><S w={26}><path d="M1 7V1h5M14 1h5v4M1 13v5h5" stroke="#245a8f" /><path d="M7 3h7M7 14h7M10.500 3v11" stroke="#e8f6ff" strokeWidth="2.500" /><path d="M13.500 13.500h12v12h-12z" fill="#eee" stroke="#222" strokeDasharray="2 1" /></S></Btn>
        </div>
        <div className="w-1" />
        <Grip />
        <Btn label="Data group" className="w-[36px]"><S w={24}><path d="M2 4l5-3h11l3 2-5 4H3zM2 10l3 2h12l4-3M2 15l3 3h8" stroke="#4b62a5" fill="#7d92cf" strokeWidth="1.500" /><rect x="11.500" y="10.500" width="11" height="12" fill="#f6f0a5" stroke="#8a8648" /><path d="M14 14h2M18 14h3M14 18h2M18 18h3" stroke="#666" /></S></Btn>
        <Sep />
        <Sel label="ACS" value="None" caret="#111" cw={8} className="ml-[2px] h-[20px] w-[479px] border border-[#bdbdbd] bg-[#e1e1e1]" inner="pl-[7px]"
          icon={<span className="-ml-[2px]"><S w={15}><path d="M.500.500h14v14H.500zM5 1v14M1 5h14M10 7h3v5h-3z" stroke="#777" /></S></span>} />
        <input aria-label="Angle" defaultValue="0.00°" className="ml-px h-[20px] w-[76px] border border-[#a8b5cc] bg-[#f4f4f6] pl-[4px] text-[#888] outline-none" />
        <Btn label="Angle list" className="ml-px h-[20px] w-[16px] bg-[#cfcfcf]"><S w={7} h={5}><path d="M1 1l2.500 2.500L6 1" stroke="#999" /></S></Btn>
        <Btn label="ACS plane" className="w-[31px]"><S w={24} h={20}><path d="M6 4h16v11H6z" stroke="#999" fill="#eee" /><path d="M6 5h16" stroke="#888" strokeWidth="2" /><path d="M2 8v10l6-3M2 8l4-2M10 3l9-2" stroke="#bbb" /></S></Btn>
        <Btn label="ACS snap" className="w-[28px]"><S w={24}><path d="M1 17l5-5 5 5-5 5z" stroke="#999" fill="#ddd" /><path d="M2 6l5-5 5 5-5 5zM13 6l5-5 5 5-5 5zM13 17l5-5 5 5-5 5zM8 12l4-4 4 4-4 4z" stroke="#b0b0b0" strokeDasharray="2 1" /></S></Btn>
        <CaretBtn label="ACS options" className="w-[16px]" />
        <Sep className="ml-px h-[28px]" />
        <Btn label="Grid lock" className="w-[33px]"><S w={26}>{gridDots}</S></Btn>
        <Sep />
        <Btn label="Grid display" className="w-[32px]"><S w={26}>{gridDots}<rect x="13.500" y="13.500" width="12" height="12" fill="#fff" stroke="#777" /><path d="M16 19l2 4 5-7" stroke="#111" strokeWidth="2.200" /></S></Btn>
        <CaretBtn label="Grid display options" color="#111" w={8} className="w-[11px]" />
        <Btn label="Floor selector" className="w-[34px]"><S w={26}><circle cx="11" cy="4" r="2" stroke={B} /><circle cx="17" cy="4" r="2" stroke={B} /><circle cx="23" cy="4" r="2" stroke={B} /><circle cx="3" cy="11" r="2" stroke={B} /><circle cx="3" cy="17" r="2" stroke={B} /><circle cx="3" cy="23" r="2" stroke={B} /><path d="M8 14l5-4 12 1-5 5zM8 14v3l12 3 5-5v-3M8 18v3l12 3 5-5v-3" fill="#e6f4fc" stroke={B} /></S></Btn>
        <CaretBtn label="Floor options" color="#111" w={8} className="w-[12px]" />
        <Sep className="mr-[4px] ml-[3px] h-[34px]" />
        <Grip />
        <div className="w-[2px]" />
        <Coord axis="X" value="0" />
        <Sep className="mr-[3px] ml-[3px] h-[34px]" />
        <Coord axis="Y" value="0.01" hot />
        <Sep className="mr-[3px] ml-[4px] h-[34px]" />
        <Coord axis="Z" value="0" />
      </div>
    </div>
  );
}

function StatusBar() {
  const s = <div className="h-[26px] w-px shrink-0 bg-[#7d7d7d]" />;
  const cell = "flex w-[31px] shrink-0 items-center justify-center";
  return (
    <footer className="flex h-[32px] shrink-0 items-center bg-[#f0f0f0] pl-[3px]">
      <div className="w-[309px] shrink-0 whitespace-nowrap">Move Element &gt; Enter point to define distance and direc</div>
      <Grip />
      <div className="w-[3px]" />
      {s}
      <Btn label="Messages" className="w-[31px]">
        <S w={24} h={22}><circle cx="10" cy="9" r="8.500" fill="#dfe9f8" stroke="#8aa6cf" /><path d="M8 17l3 4 2-4z" fill="#a9bfe0" /><circle cx="10" cy="5" r="1.700" fill="#1c3a7a" /><path d="M8 8.500h2.500V14M7.500 14h5.500" stroke="#1c3a7a" strokeWidth="2" /><path d="M19 4h5l-2.500-3z" fill="#111" /></S>
      </Btn>
      {s}
      <span className="flex-1 pl-[2px]">Space</span>
      {s}
      <Btn label="Snap mode" className="w-[31px]"><S w={24}><path d="M3 21l14-4 4-14" stroke="#456" strokeWidth="1.500" /><circle cx="3" cy="21" r="2.200" fill="#fff" stroke={B} strokeWidth="1.500" /><circle cx="17" cy="17" r="2.200" fill="#fff" stroke={B} strokeWidth="1.500" /><circle cx="21" cy="3" r="2.200" fill="#fff" stroke={B} strokeWidth="1.500" /></S></Btn>
      {s}
      <Btn label="Locks" className="w-[31px]"><S w={16}><path d="M4 8V5a4 4 0 0 1 8 0v3" stroke="#777" strokeWidth="2" /><rect x="1" y="7" width="14" height="9" fill="#b5b520" stroke="#6d6d18" /><path d="M2 9h12" stroke="#dede70" /></S></Btn>
      {s}
      <span className="w-[139px] shrink-0 pl-[3px]">A-AREA (Areas)</span>
      {s}
      <span className="w-[123px]" />
      {s}<span className={cell} />{s}<span className={cell} />{s}<span className={cell} />{s}
      <span className={cell}><S w={20}><path d="M5 1h11c3 0 3 4 0 4h-1v10c0 5-5 4-5 1H2c-2-1-1-4 1-4h2V5C1 5 2 1 5 1zM5 5h10" stroke="#a0a0a0" /></S></span>{s}
      <span className={cell}><S w={18}><rect x="2.500" y="2.500" width="13" height="13" fill="#d9f0fa" stroke="#4aa3d3" /><path d="M9 0v7" stroke="#2d9a4a" strokeWidth="1.500" /><path d="M12 9h6" stroke="#b32525" strokeWidth="1.500" /><path d="M0 9h6M9 12v6" stroke="#4aa3d3" /></S></span>{s}
      <span className={cell} />{s}
      <span className={cell}><S w={17} h={19}><path d="M2 1h11v17H2z" fill="#1379c4" /><path d="M0 3h3M0 6h3M0 9h3M0 12h3M0 15h3" stroke="#1379c4" strokeWidth="1.500" /><path d="M15 1v4M15 7v4M15 13v4" stroke="#1379c4" strokeWidth="2" /></S></span>{s}
      <span className={cell} />{s}
      <span className={cell}><S w={16} h={18}><path d="M1 2l14-1-1 13-5 3-7-3z" stroke="#b5b5b5" fill="#ececec" /><path d="M5 5h6v6H5zM7 7h3v3" stroke="#909090" /></S></span>{s}
      <span className="flex w-[37px] shrink-0 items-center pl-[7px]"><S w={20}><circle cx="8" cy="9" r="7" stroke="#2a86c8" fill="#e9f5fc" /><path d="M1 9h14M8 2v14M3 5h10M3 13h10" stroke="#2a86c8" /><ellipse cx="8" cy="9" rx="3.500" ry="7" stroke="#2a86c8" /><path d="M11 11l8 8M19 11l-8 8" stroke="#c01822" strokeWidth="2.500" /></S></span>
    </footer>
  );
}

export default function App() {
  return (
    <div className="flex h-screen min-h-[600px] w-full flex-col overflow-hidden bg-[#d4d4d4] font-['Open_Sans','Noto_Sans',sans-serif] text-[11px] text-[#222]">
      <TitleBar />
      <Tabs />
      <Ribbon />
      <PartBar />
      <main className="relative flex min-h-0 flex-1 border-r-2 border-[#c6c6c6]">
        <Explorer />
        <MainView />
        <Properties />
        <MoveDialog />
      </main>
      <ModelBar />
      <CoordBar />
      <StatusBar />
    </div>
  );
}
